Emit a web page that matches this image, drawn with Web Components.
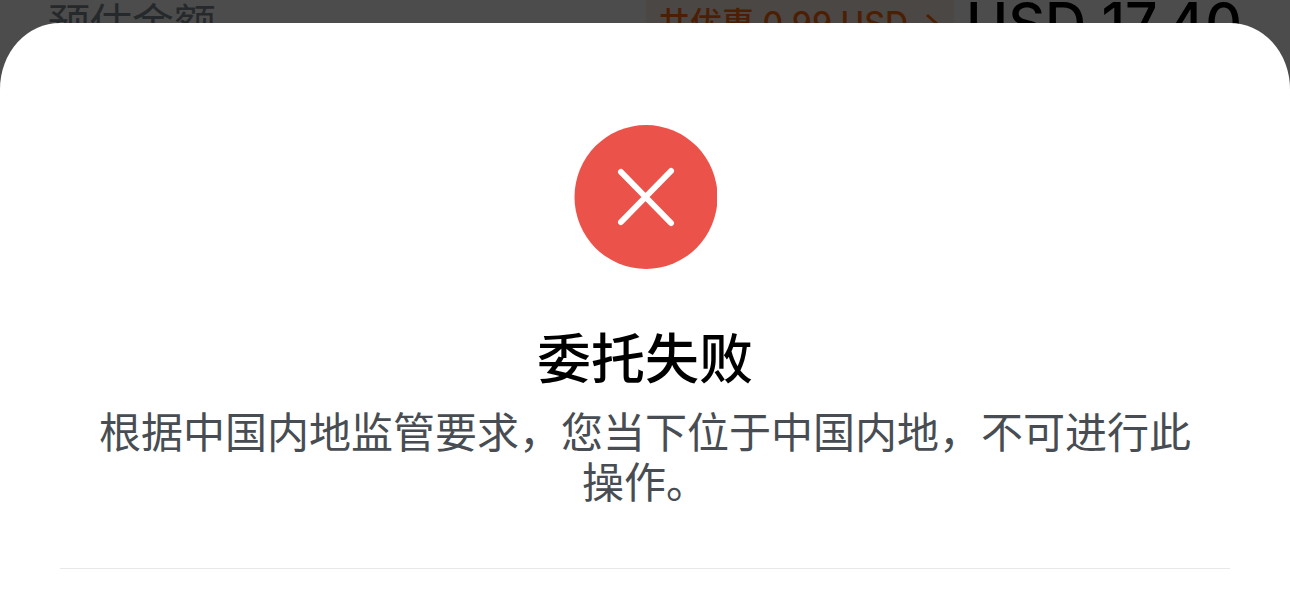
<!DOCTYPE html>
<html lang="zh-CN">
<head>
<meta charset="utf-8">
<meta name="viewport" content="width=device-width, initial-scale=1">
<title>委托失败</title>
<style>
  body { margin: 0; font-family: Inter, "Noto Sans CJK SC", sans-serif; }
</style>
</head>
<body>
<result-page>
  <order-summary slot="page">
    <span slot="label">预估金额</span>
    <span slot="saving">共优惠 0.99 USD</span>
    <span slot="total">USD 17.40</span>
  </order-summary>
  <result-sheet>
    <error-badge slot="icon"></error-badge>
    <span slot="title">委托失败</span>
    <span slot="message">根据中国内地监管要求，您当下位于中国内地，不可进行此操作。</span>
  </result-sheet>
</result-page>
<script>
  const define = (name, markup) => {
    const template = document.createElement('template');
    template.innerHTML = markup;
    customElements.define(name, class extends HTMLElement {
      constructor() {
        super();
        this.attachShadow({ mode: 'open' }).append(template.content.cloneNode(true));
      }
    });
  };

  // Page content, dimming layer and sheet share one grid cell.
  define('result-page', `
    <style>
      :host { display: grid; grid-template-columns: minmax(0, 1fr); min-height: 100vh; background: #fff; }
      .page, .dim, .front { grid-area: 1 / 1; }
      .dim { background: rgba(0, 0, 0, .7); }
      .front { display: grid; padding-top: 23px; }
    </style>
    <div class="page"><slot name="page"></slot></div>
    <div class="dim"></div>
    <div class="front"><slot></slot></div>`);

  define('order-summary', `
    <style>
      :host { display: flex; align-items: center; height: 48px; padding: 0 48px; white-space: nowrap; }
      .label { flex: 1; font-size: 42px; line-height: 48px; color: #7f8a90; }
      .saving { display: flex; align-items: center; gap: 16px; height: 60px; padding: 0 12px; margin-right: 12px;
        background: #fbeee6; color: #ff6a10; font-size: 32px; line-height: 36px; font-weight: 500; }
      .total { font-size: 57px; line-height: 48px; font-weight: 500; color: #000; }
    </style>
    <div class="label"><slot name="label"></slot></div>
    <div class="saving"><slot name="saving"></slot>
      <svg width="18" height="24" viewBox="0 0 18 24" fill="none" stroke="currentColor" stroke-width="3" aria-hidden="true"><path d="M3 3 13 12 3 21"/></svg>
    </div>
    <div class="total"><slot name="total"></slot></div>`);

  define('error-badge', `
    <style>
      :host { display: block; width: 144px; height: 144px; }
      svg { display: block; }
    </style>
    <svg width="144" height="144" viewBox="0 0 144 144" role="img" aria-label="失败">
      <ellipse cx="73" cy="72" rx="71.5" ry="72" fill="#eb524a"/>
      <path d="M48 47 98 98M98 46 48 97" fill="none" stroke="#fff" stroke-width="6" stroke-linecap="round"/>
    </svg>`);

  define('result-sheet', `
    <style>
      :host { display: flex; flex-direction: column; align-items: center; box-sizing: border-box;
        padding: 102px 60px 45px; background: #fff; border-radius: 60px 60px 0 0 / 66px 66px 0 0; text-align: center; }
      h1 { margin: 55px 0 0; font-size: 54px; line-height: 72px; font-weight: 500; color: #000; }
      p { margin: 12px 0 0; padding: 0 38px; font-size: 42px; line-height: 50px; color: #474d52; }
      hr { align-self: stretch; margin: 60px 0 0; border: 0; border-top: 1px solid #e8e8e8; }
    </style>
    <slot name="icon"></slot>
    <h1><slot name="title"></slot></h1>
    <p><slot name="message"></slot></p>
    <hr>`);
</script>
</body>
</html>
